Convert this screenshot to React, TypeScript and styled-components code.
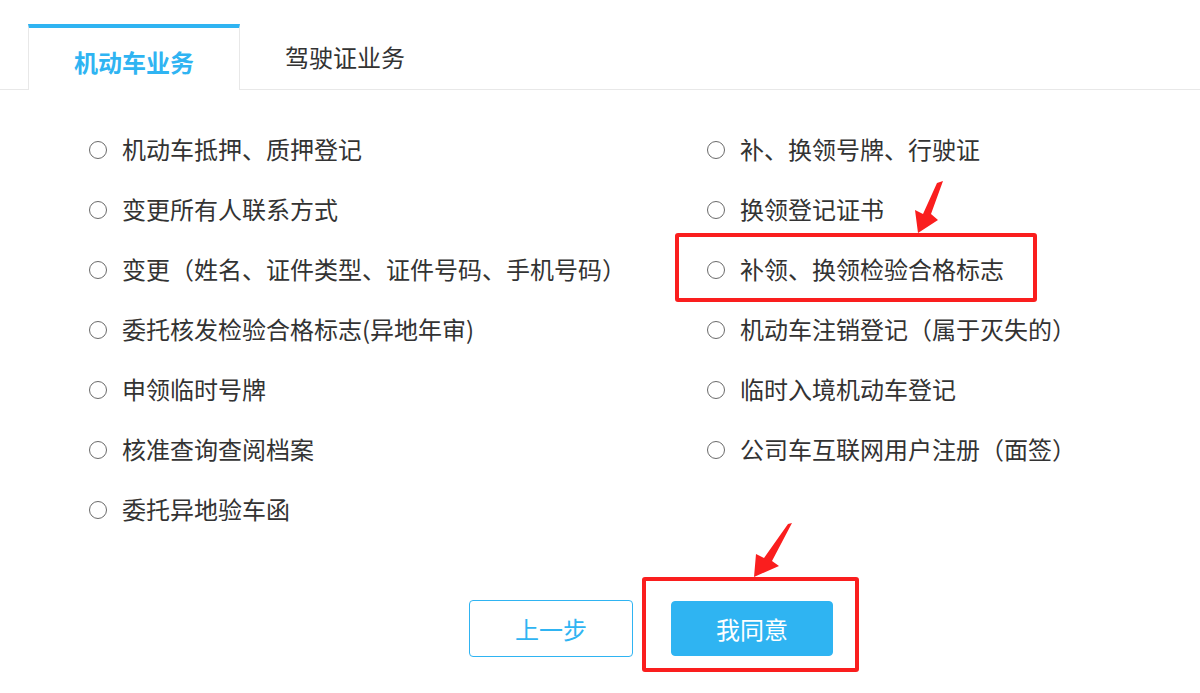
import styled, { createGlobalStyle } from 'styled-components';

const GlobalStyle = createGlobalStyle`
  body {
    margin: 0;
    background: #fff;
    font-family: "Microsoft YaHei", "Noto Sans CJK SC", "Noto Sans", sans-serif;
    color: #333;
  }
`;

const Page = styled.div`
  position: relative;
  width: 1200px;
  height: 693px;
  overflow: hidden;
`;

const TabBar = styled.ul`
  display: flex;
  margin: 0;
  padding: 24px 0 0 28px;
  list-style: none;
  border-bottom: 1px solid #e8e8e8;
  height: 65px;
`;

const Tab = styled.li<{ $active?: boolean }>`
  box-sizing: border-box;
  width: ${(p) => (p.$active ? '212px' : '210px')};
  height: ${(p) => (p.$active ? '66px' : '65px')};
  display: flex;
  justify-content: center;
  font-size: 24px;
  line-height: 1;
  ${(p) =>
    p.$active
      ? `
    background: #fff;
    border-top: 4px solid #2fb4f2;
    border-left: 1px solid #e8e8e8;
    border-right: 1px solid #e8e8e8;
    color: #2fb4f2;
    font-weight: bold;
    padding-top: 22px;
  `
      : `
    background: transparent;
    color: #333;
    padding-top: 21px;
  `}
`;

const Options = styled.div`
  display: grid;
  grid-template-columns: 618px 1fr;
  grid-auto-flow: column;
  grid-template-rows: repeat(7, 60px);
  padding: 28px 0 2px 89px;
`;

const Option = styled.label`
  display: flex;
  align-items: center;
  gap: 15px;
  font-size: 24px;
  color: #333;
  cursor: pointer;
`;

const Radio = styled.span`
  box-sizing: border-box;
  width: 18px;
  height: 18px;
  margin-top: 3px;
  border: 1px solid #6a6a6a;
  border-radius: 50%;
  flex-shrink: 0;
`;

const Actions = styled.div`
  display: flex;
  gap: 38px;
  padding: 60px 0 0 469px;
  align-items: center;
`;

const Button = styled.button<{ $primary?: boolean }>`
  box-sizing: border-box;
  width: ${(p) => (p.$primary ? '162px' : '164px')};
  height: ${(p) => (p.$primary ? '55px' : '57px')};
  border-radius: 4px;
  font-family: inherit;
  font-size: 24px;
  cursor: pointer;
  border: 1px solid #2fb4f2;
  background: ${(p) => (p.$primary ? '#2fb4f2' : '#fff')};
  color: ${(p) => (p.$primary ? '#fff' : '#2fb4f2')};
`;

const Highlight = styled.div<{ $x: number; $y: number; $w: number; $h: number }>`
  position: absolute;
  box-sizing: border-box;
  left: ${(p) => p.$x}px;
  top: ${(p) => p.$y}px;
  width: ${(p) => p.$w}px;
  height: ${(p) => p.$h}px;
  border: 4px solid #fa1e1e;
  border-radius: 3px;
  pointer-events: none;
`;

const Arrows = styled.svg`
  position: absolute;
  left: 0;
  top: 0;
  pointer-events: none;
`;

const leftItems = [
  '机动车抵押、质押登记',
  '变更所有人联系方式',
  '变更（姓名、证件类型、证件号码、手机号码）',
  '委托核发检验合格标志(异地年审)',
  '申领临时号牌',
  '核准查询查阅档案',
  '委托异地验车函',
];

const rightItems = [
  '补、换领号牌、行驶证',
  '换领登记证书',
  '补领、换领检验合格标志',
  '机动车注销登记（属于灭失的）',
  '临时入境机动车登记',
  '公司车互联网用户注册（面签）',
];

export default function App() {
  return (
    <Page>
      <GlobalStyle />
      <TabBar>
        <Tab $active>机动车业务</Tab>
        <Tab>驾驶证业务</Tab>
      </TabBar>
      <Options>
        {leftItems.map((t) => (
          <Option key={t}>
            <Radio />
            {t}
          </Option>
        ))}
        {rightItems.map((t) => (
          <Option key={t}>
            <Radio />
            {t}
          </Option>
        ))}
      </Options>
      <Actions>
        <Button>上一步</Button>
        <Button $primary>我同意</Button>
      </Actions>

      <Highlight $x={675} $y={233} $w={362} $h={69} />
      <Highlight $x={642} $y={577} $w={217} $h={95} />
      <Arrows width="1200" height="693" viewBox="0 0 1200 693">
        <polygon
          fill="#fa1e1e"
          points="943,181 931,214 938,220 918,233 915,210 923,214 937,183"
        />
        <polygon
          fill="#fa1e1e"
          points="792,523 772,561 779,566 754,577 756,554 764,558 788,524"
        />
      </Arrows>
    </Page>
  );
}
